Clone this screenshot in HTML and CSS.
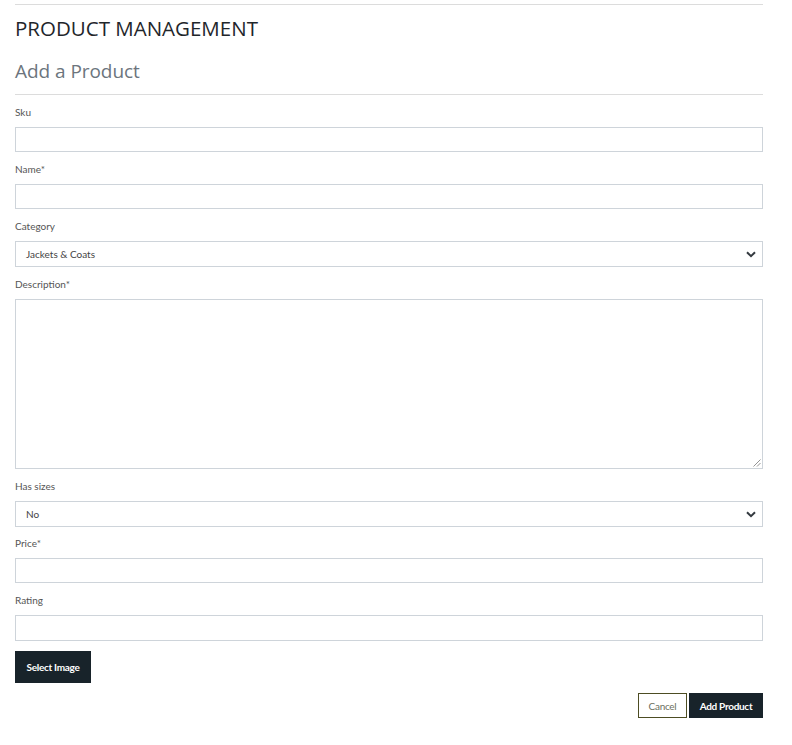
FILE: index.html
```html
<!DOCTYPE html>
<html>
<head>
<meta charset="utf-8">
<link rel="stylesheet" href="styles.css">
</head>
<body>
<div class="page">
  <hr class="rule top">
  <h2 class="title">PRODUCT MANAGEMENT</h2>
  <h5 class="subtitle">Add a Product</h5>
  <hr class="rule mid">
  <form class="form">
    <div class="group">
      <label class="label">Sku</label>
      <input class="field" type="text">
    </div>
    <div class="group">
      <label class="label">Name*</label>
      <input class="field" type="text">
    </div>
    <div class="group">
      <label class="label">Category</label>
      <div class="select">
        <span class="select-text">Jackets &amp; Coats</span>
        <svg class="chev" width="10" height="7" viewBox="0 0 10 7"><path d="M1 1.2 L5 5.2 L9 1.2" fill="none" stroke="#343a40" stroke-width="2"/></svg>
      </div>
    </div>
    <div class="group">
      <label class="label">Description*</label>
      <div class="area">
        <svg class="grip" width="8" height="8" viewBox="0 0 8 8"><path d="M7.5 0.5 L0.5 7.5 M7.5 4 L4 7.5" stroke="#777" stroke-width="0.8"/></svg>
      </div>
    </div>
    <div class="group group-select">
      <label class="label">Has sizes</label>
      <div class="select">
        <span class="select-text">No</span>
        <svg class="chev" width="10" height="7" viewBox="0 0 10 7"><path d="M1 1.2 L5 5.2 L9 1.2" fill="none" stroke="#343a40" stroke-width="2"/></svg>
      </div>
    </div>
    <div class="group">
      <label class="label">Price*</label>
      <input class="field" type="text">
    </div>
    <div class="group">
      <label class="label">Rating</label>
      <input class="field field-tall" type="text">
    </div>
    <button class="btn dark select-img" type="button">Select Image</button>
    <div class="actions">
      <button class="btn outline" type="button">Cancel</button>
      <button class="btn dark" type="button">Add Product</button>
    </div>
  </form>
</div>
</body>
</html>
```
FILE: styles.css
```css
* { box-sizing: border-box; }
body {
  margin: 0;
  background: #fff;
  font-family: Lato, "Noto Sans", sans-serif;
  color: #212529;
}
.page {
  padding: 4px 29px 0 15px;
}
.rule {
  border: 0;
  border-top: 1px solid #dcdcdc;
  margin: 0;
}
.title {
  margin: 11px 0 0;
  font-family: "Open Sans", Lato, sans-serif;
  font-weight: 400;
  font-size: 20.5px;
  line-height: 24px;
  letter-spacing: 0;
  color: #1f262b;
}
.subtitle {
  margin: 19px 0 0;
  font-family: "Open Sans", Lato, sans-serif;
  font-weight: 400;
  font-size: 19px;
  line-height: 24px;
  letter-spacing: -0.05px;
  color: #6c757d;
}
.rule.mid { margin-top: 11px; }
.form {
  display: flex;
  flex-direction: column;
  padding-top: 10px;
}
.group {
  display: flex;
  flex-direction: column;
  margin-bottom: 10px;
}
.group-select { margin-bottom: 9px; }
.label {
  font-size: 10px;
  line-height: 14px;
  color: #555;
  margin-bottom: 8px;
}
.field, .select, .area {
  width: 100%;
  height: 25px;
  border: 1px solid #ced4da;
  border-radius: 0;
  background: #fff;
  margin: 0;
  padding: 0 10px;
  font-family: inherit;
  font-size: 10px;
}
.field-tall { height: 26px; }
.select {
  height: 26px;
  display: flex;
  align-items: center;
  justify-content: space-between;
  padding: 0 6px 0 10px;
}
.select-text { font-size: 10px; color: #444; }
.area {
  height: 170px;
  position: relative;
}
.grip {
  position: absolute;
  right: 1px;
  bottom: 1px;
}
.btn {
  font-family: inherit;
  font-size: 10px;
  font-weight: 700;
  letter-spacing: -0.3px;
  border-radius: 0;
  cursor: pointer;
}
.dark {
  background: #18232a;
  color: #fff;
  border: 1px solid #18232a;
}
.select-img {
  align-self: flex-start;
  width: 76px;
  height: 32px;
}
.actions {
  display: flex;
  justify-content: flex-end;
  gap: 2px;
  margin-top: 10px;
}
.actions .btn { height: 25px; padding: 0 8px; }
.outline {
  background: #fff;
  border: 1px solid #4d4d23;
  color: #6b7060;
  font-weight: 400;
  width: 49px;
}
.actions .dark { width: 74px; }
```
